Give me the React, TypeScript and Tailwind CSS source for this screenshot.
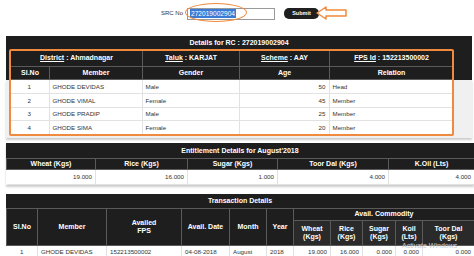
import React from 'react'

const font = { fontFamily: '"Liberation Sans", Arial, sans-serif' }

const members = [
  { sl: 1, name: 'GHODE DEVIDAS', gender: 'Male', age: 50, relation: 'Head' },
  { sl: 2, name: 'GHODE VIMAL', gender: 'Female', age: 45, relation: 'Member' },
  { sl: 3, name: 'GHODE PRADIP', gender: 'Male', age: 25, relation: 'Member' },
  { sl: 4, name: 'GHODE SIMA', gender: 'Female', age: 20, relation: 'Member' },
]

const th = 'border border-[#5a5a5a] text-white font-bold text-[7px] text-center p-0'
const td = 'border-b border-r border-[#e2e2e2] text-[6.2px] text-[#333] p-0 px-[3px]'

export default function App() {
  return (
    <div className="relative w-[474px] h-[256px] overflow-hidden bg-white" style={font}>
      {/* search bar */}
      <div className="flex items-center h-[36px] pl-[161px] pb-[9px]">
        <span className="text-[6px] text-[#333]">SRC No</span>
        <div className="ml-[4px] w-[88px] h-[12px] border border-[#999] bg-white flex items-center pl-[2px]">
          <span className="bg-[#3a7bd5] text-white text-[6.6px] leading-[9px] px-[1px]">272019002904</span>
        </div>
        <button className="ml-[9px] w-[35px] h-[11px] rounded-[5px] bg-[#1f1f1f] text-white text-[5.5px] font-bold">Submit</button>
      </div>
      <div className="absolute left-[185px] top-[3px] w-[62px] h-[19px] rounded-[50%] border-[1.5px] border-[#ef8a3e]" />
      <svg className="absolute left-[315px] top-[6px]" width="33" height="14" viewBox="0 0 33 14">
        <polygon points="2,7 11,1 11,4 31,4 31,10 11,10 11,13" fill="white" stroke="#ef8a3e" strokeWidth="1.5" strokeLinejoin="round" />
      </svg>

      {/* details */}
      <div className="ml-[6px] w-[466px]">
        <div className="h-[14px] bg-[#1e1e1e] text-white font-bold text-[7px] leading-[14px] text-center">
          Details for RC : 272019002904
        </div>
        <div className="bg-[#1e1e1e] pl-[4px] pr-[19px]">
          <table className="w-[443px] table-fixed border-collapse">
            <colgroup>
              <col className="w-[39px]" />
              <col className="w-[93px]" />
              <col className="w-[97px]" />
              <col className="w-[90px]" />
              <col className="w-[124px]" />
            </colgroup>
            <tbody>
              <tr className="h-[16px]">
                <td colSpan={2} className={th}><span className="underline">District</span> : Ahmadnagar</td>
                <td className={th}><span className="underline">Taluk</span> : KARJAT</td>
                <td className={th}><span className="underline">Scheme</span> : AAY</td>
                <td className={th}><span className="underline">FPS Id</span> : 152213500002</td>
              </tr>
              <tr className="h-[13px]">
                <td className={th}>Sl.No</td>
                <td className={th}>Member</td>
                <td className={th}>Gender</td>
                <td className={th}>Age</td>
                <td className={th}>Relation</td>
              </tr>
            </tbody>
          </table>
        </div>
        <div className="bg-[#f0f0f0] pl-[4px] pb-[3px] shadow-[0_2px_2px_#ccc]">
          <table className="w-[443px] table-fixed border-collapse bg-white">
            <colgroup>
              <col className="w-[39px]" />
              <col className="w-[93px]" />
              <col className="w-[97px]" />
              <col className="w-[90px]" />
              <col className="w-[124px]" />
            </colgroup>
            <tbody>
              {members.map(m => (
                <tr key={m.sl} className="h-[13.5px]">
                  <td className={`${td} text-center`}>{m.sl}</td>
                  <td className={td}>{m.name}</td>
                  <td className={td}>{m.gender}</td>
                  <td className={`${td} text-right`}>{m.age}</td>
                  <td className={td}>{m.relation}</td>
                </tr>
              ))}
            </tbody>
          </table>
        </div>
      </div>
      <div className="absolute left-[9px] top-[49px] w-[445px] h-[87px] border-2 border-[#ef8a3e] rounded-[2px]" />

      {/* entitlement */}
      <div className="ml-[6px] mt-[5px] w-[468px] shadow-[0_2px_2px_#ccc]">
        <div className="h-[15px] bg-[#1e1e1e] text-white font-bold text-[7px] leading-[15px] text-center">
          Entitlement Details for August'2018
        </div>
        <table className="w-full table-fixed border-collapse">
          <colgroup>
            <col className="w-[89px]" />
            <col className="w-[92px]" />
            <col className="w-[90px]" />
            <col className="w-[111px]" />
            <col className="w-[86px]" />
          </colgroup>
          <tbody>
            <tr className="h-[11px] bg-[#1e1e1e]">
              {['Wheat (Kgs)', 'Rice (Kgs)', 'Sugar (Kgs)', 'Toor Dal (Kgs)', 'K.Oil (Lts)'].map(h => (
                <td key={h} className={th}>{h}</td>
              ))}
            </tr>
            <tr className="h-[15px] bg-white">
              {['19.000', '16.000', '1.000', '4.000', '4.000'].map((v, i) => (
                <td key={i} className={`${td} text-right`}>{v}</td>
              ))}
            </tr>
          </tbody>
        </table>
      </div>

      {/* transactions */}
      <div className="ml-[6px] mt-[9px] w-[468px]">
        <div className="h-[14px] bg-[#1e1e1e] text-white font-bold text-[7px] leading-[14px] text-center">
          Transaction Details
        </div>
        <table className="w-full table-fixed border-collapse">
          <colgroup>
            <col className="w-[31px]" />
            <col className="w-[69px]" />
            <col className="w-[75px]" />
            <col className="w-[48px]" />
            <col className="w-[37px]" />
            <col className="w-[27px]" />
            <col className="w-[37px]" />
            <col className="w-[32px]" />
            <col className="w-[33px]" />
            <col className="w-[27px]" />
            <col className="w-[52px]" />
          </colgroup>
          <tbody>
            <tr className="h-[12px] bg-[#1e1e1e]">
              <td rowSpan={2} className={th}>Sl.No</td>
              <td rowSpan={2} className={th}>Member</td>
              <td rowSpan={2} className={`${th} leading-[8px]`}>Availed<br />FPS</td>
              <td rowSpan={2} className={th}>Avail. Date</td>
              <td rowSpan={2} className={th}>Month</td>
              <td rowSpan={2} className={th}>Year</td>
              <td colSpan={5} className={th}>Avail. Commodity</td>
            </tr>
            <tr className="h-[25px] bg-[#1e1e1e]">
              {[['Wheat', '(Kgs)'], ['Rice', '(Kgs)'], ['Sugar', '(Kgs)'], ['Koil', '(Lts)'], ['Toor Dal', '(Kgs)']].map(([a, b]) => (
                <td key={a} className={`${th} bg-[#2a2a2a] leading-[8px]`}>{a}<br />{b}</td>
              ))}
            </tr>
            <tr className="h-[13px] bg-white">
              <td className={`${td} text-center`}>1</td>
              <td className={td}>GHODE DEVIDAS</td>
              <td className={td}>152213500002</td>
              <td className={td}>04-08-2018</td>
              <td className={td}>August</td>
              <td className={td}>2018</td>
              <td className={`${td} text-right`}>19.000</td>
              <td className={`${td} text-right`}>16.000</td>
              <td className={`${td} text-right`}>0.000</td>
              <td className={`${td} text-right`}>0.000</td>
              <td className={`${td} text-right`}>0.000</td>
            </tr>
          </tbody>
        </table>
      </div>
      <div className="absolute left-[402px] top-[242px] text-[7px] text-[#cfcfcf] leading-[8px] whitespace-nowrap">Activate Windows</div>
    </div>
  )
}
